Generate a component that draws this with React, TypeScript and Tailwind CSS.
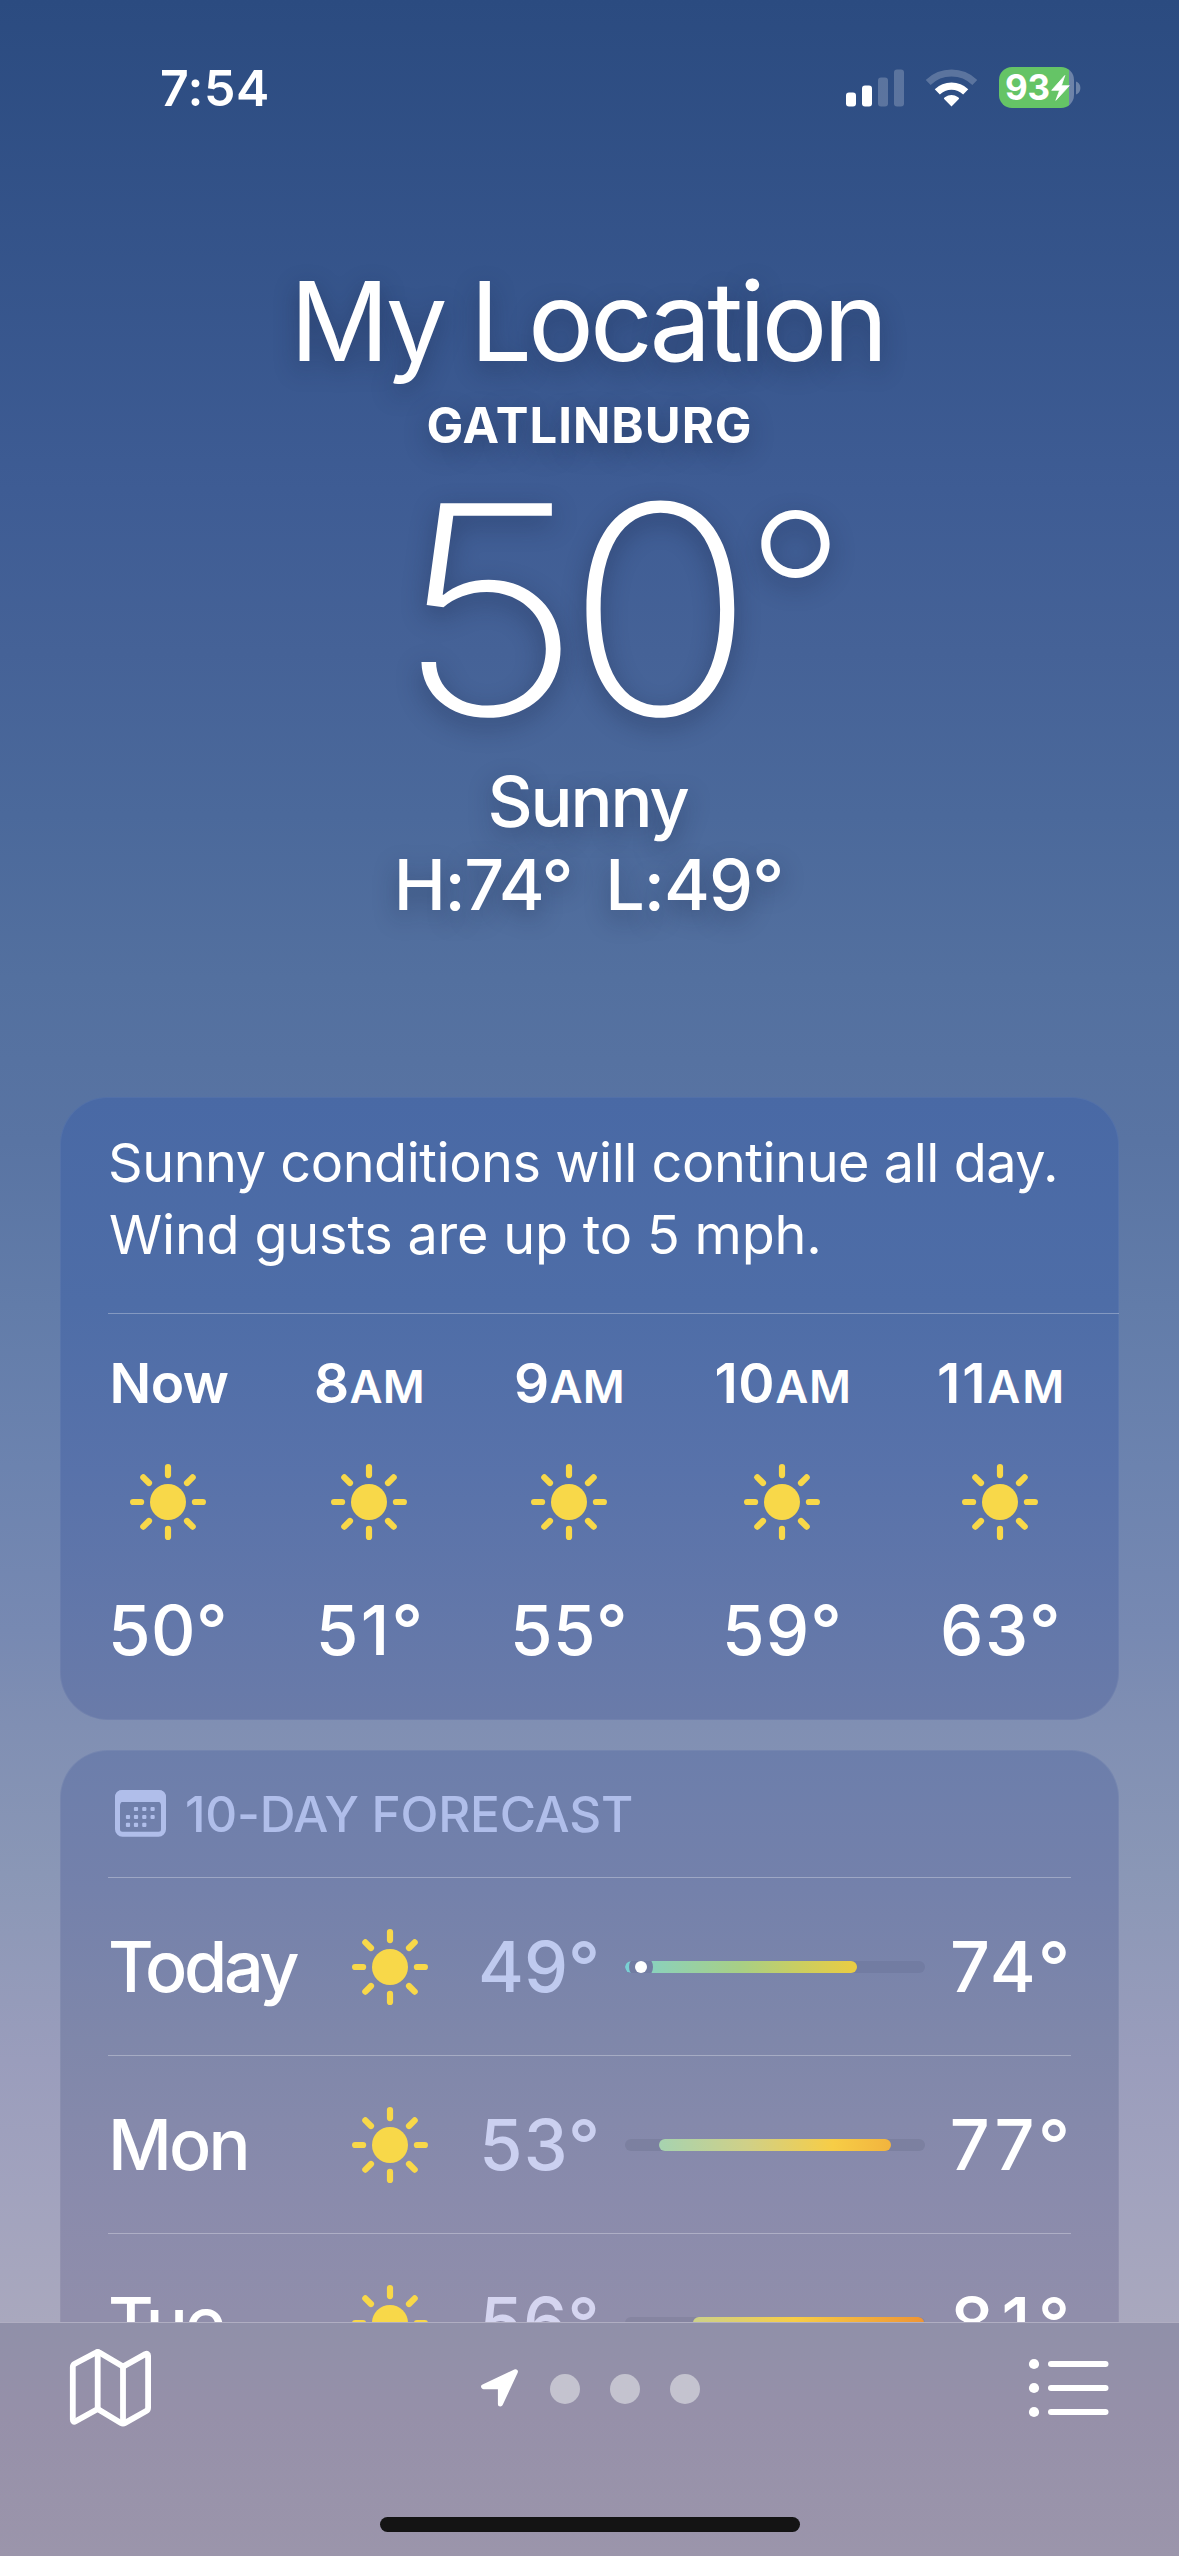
type Hour = { label: string; suffix?: string; temp: string; width: string; labelTracking: string; tempTracking: string };
type Day = {
  name: string;
  nameTracking: string;
  low: string;
  high: string;
  lowColor: string;
  lowTracking: string;
  highTracking: string;
  track: string;
  fill: string;
  now?: boolean;
};

const hours: Hour[] = [
  { label: "Now", temp: "50°", width: "w-[120px]", labelTracking: "tracking-[-0.6px] pl-[2px]", tempTracking: "tracking-[0.5px]" },
  { label: "8", suffix: "AM", temp: "51°", width: "w-[106px]", labelTracking: "tracking-[0.2px] pl-[1px]", tempTracking: "tracking-[2.2px] pl-[3px]" },
  { label: "9", suffix: "AM", temp: "55°", width: "w-[118px]", labelTracking: "tracking-[0.2px] pl-[1px]", tempTracking: "tracking-[0.5px]" },
  { label: "10", suffix: "AM", temp: "59°", width: "w-[132px]", labelTracking: "tracking-[0.6px] pl-[2px]", tempTracking: "tracking-[1.1px] pl-[1px]" },
  { label: "11", suffix: "AM", temp: "63°", width: "w-[128px]", labelTracking: "tracking-[1.8px] pl-[3px]", tempTracking: "tracking-[1.5px] pl-[2px]" },
];

const days: Day[] = [
  {
    name: "Today",
    nameTracking: "tracking-[-3.3px]",
    low: "49°",
    high: "74°",
    lowColor: "text-[#bfcaef]",
    lowTracking: "tracking-[0px]",
    highTracking: "tracking-[4px] -mr-[4px]",
    track: "bg-[#727ca2]",
    fill: "ml-0 w-[232px] bg-[linear-gradient(90deg,#78d0d6_0%,#8dd1b8_14%,#a8cf85_50%,#c9ce62_74%,#ebcc42_100%)]",
    now: true,
  },
  {
    name: "Mon",
    nameTracking: "tracking-[-2.8px]",
    low: "53°",
    high: "77°",
    lowColor: "text-[#cbd0f0]",
    lowTracking: "tracking-[1.2px] -mr-[1.2px]",
    highTracking: "tracking-[3.5px] -mr-[3.5px]",
    track: "bg-[#7c80a0]",
    fill: "ml-[34px] w-[232px] bg-[linear-gradient(90deg,#a6d3b0_0%,#d0d087_38%,#f7cd46_75%,#f2b43e_100%)]",
  },
  {
    name: "Tue",
    nameTracking: "tracking-[-2.8px]",
    low: "56°",
    high: "81°",
    lowColor: "text-[#d5d5f0]",
    lowTracking: "tracking-[0.5px]",
    highTracking: "tracking-[7.5px] -mr-[7.5px]",
    track: "bg-[#8685a1]",
    fill: "ml-[68px] w-[231px] bg-[linear-gradient(90deg,#ccd18a_0%,#f7cd46_44%,#ef9534_100%)]",
  },
];

function Sun() {
  const angles = [0, 45, 90, 135, 180, 225, 270, 315];
  return (
    <svg className="block size-[76px] shrink-0" viewBox="-38 -38 76 76">
      <circle r="18" fill="#f8d849" />
      {angles.map((a) => (
        <line key={a} x1="0" y1="-26.9" x2="0" y2="-34.9" stroke="#f8d849" strokeWidth="6.2" strokeLinecap="round" transform={`rotate(${a})`} />
      ))}
    </svg>
  );
}

function StatusBar() {
  return (
    <header className="flex h-[176px] shrink-0 items-center justify-between pr-[98px] pl-[160px]">
      <span className="text-[50px] leading-[60px] font-semibold tracking-[0.5px]">7:54</span>
      <div className="flex items-center">
        <svg className="mr-[22px] block h-[38px] w-[58px]" viewBox="0 0 58 38">
          <rect x="0" y="23.5" width="10" height="14" rx="3" fill="#fff" />
          <rect x="16" y="16.5" width="10" height="21" rx="3" fill="#fff" />
          <rect x="32" y="8.5" width="10" height="29" rx="3" fill="#fff" fillOpacity=".22" />
          <rect x="48" y="0.5" width="10" height="37" rx="3" fill="#fff" fillOpacity=".22" />
        </svg>
        <svg className="mr-[22px] block h-[38px] w-[51px]" viewBox="0 0 51 38" fill="none">
          <path d="M2.2 13.4A33.5 33.5 0 0 1 48.8 13.4" stroke="#fff" strokeOpacity=".22" strokeWidth="7" />
          <path d="M11.3 22.8A20.5 20.5 0 0 1 39.7 22.8" stroke="#fff" strokeWidth="7.4" />
          <path d="M25.5 37.5L17.9 29.7Q17.9 28.8 18.8 28.2A11.8 11.8 0 0 1 32.2 28.2Q33.1 28.8 33.1 29.7Z" fill="#fff" />
        </svg>
        <div className="mb-[1px] flex items-center">
          <div className="flex h-[41px] w-[75px] items-center rounded-[13px] bg-[linear-gradient(90deg,#65c466_70px,rgba(255,255,255,0.3)_70px)] pl-[6px]">
            <span className="text-[35px] leading-[41px] font-bold tracking-[-0.2px]">93</span>
            <svg className="ml-[1px] block h-[26px] w-[19px] shrink-0" viewBox="0 0 19 26">
              <path d="M13.8.5L.7 15.3H8.6L4.9 25.3L18.3 10.7H10.4Z" fill="#fff" stroke="#fff" strokeWidth=".8" strokeLinejoin="round" />
            </svg>
          </div>
          <svg className="ml-[2px] block h-[14px] w-[5px]" viewBox="0 0 5 14">
            <path d="M0 .5A7 7 0 0 1 0 13.5Z" fill="#fff" fillOpacity=".3" />
          </svg>
        </div>
      </div>
    </header>
  );
}

function Hero() {
  return (
    <section className="flex shrink-0 flex-col items-center pt-[80px] [text-shadow:0_8px_24px_rgba(20,30,60,0.4)]">
      <h1 className="mr-[5px] text-[110px] leading-[130px] font-[420] tracking-[-4.2px]">My Location</h1>
      <h2 className="text-[49px] leading-[80px] font-[680] tracking-[1px]">GATLINBURG</h2>
      <div className="flex h-[286px] items-center self-start pl-[395px] text-[291px] leading-[286px] font-[185]">
        <span className="block origin-left scale-x-[1.115]">5</span>
        <span className="ml-[2px] block origin-left scale-x-[1.085]">0</span>
        <span className="ml-[4px] block pb-[32px] text-[222px] leading-[254px] font-[250]">°</span>
      </div>
      <p className="mr-[4px] text-[70px] leading-[100px] font-medium tracking-[-2.1px]">Sunny</p>
      <p className="mr-[2px] flex gap-[33px] text-[70px] leading-[65px] font-medium">
        <span className="tracking-[-1.4px]">H:74°</span>
        <span className="tracking-[-0.95px]">L:49°</span>
      </p>
    </section>
  );
}

function HourlyCard() {
  return (
    <section className="mx-[60px] mt-[180px] h-[623px] w-[1059px] shrink-0 overflow-hidden rounded-[48px] bg-[linear-gradient(180deg,#4969a5_0%,#4e6da7_33%,#5872aa_60%,#6a7ba9_100%)] pl-[48px] shadow-[inset_0_0_0_1px_rgba(255,255,255,0.05)]">
      <div className="pt-[30px] text-[54px] leading-[72px]">
        <p className="tracking-[-0.46px]">Sunny conditions will continue all day.</p>
        <p className="pl-[1px] tracking-[-0.2px]">Wind gusts are up to 5 mph.</p>
      </div>
      <div className="mt-[42px] h-px bg-white/30" />
      <div className="flex gap-[88px] pt-[29px]">
        {hours.map((h) => (
          <div key={h.label} className={`flex shrink-0 flex-col items-center ${h.width}`}>
            <div className={`h-[80px] text-[55px] leading-[80px] font-[620] whitespace-nowrap ${h.labelTracking}`}>
              {h.label}
              {h.suffix && <span className="text-[45.5px] leading-[40px]">{h.suffix}</span>}
            </div>
            <div className="mt-[41px]">
              <Sun />
            </div>
            <div className={`mt-[50px] text-[69px] leading-[80px] font-medium whitespace-nowrap ${h.tempTracking}`}>{h.temp}</div>
          </div>
        ))}
      </div>
    </section>
  );
}

function CalendarIcon() {
  const dots = [
    [21, 19], [29.3, 19], [37.6, 19],
    [13, 27], [21, 27], [29.3, 27], [37.6, 27],
    [13, 34.8], [21, 34.8], [29.3, 34.8],
  ];
  return (
    <svg className="mb-[1px] ml-[7px] block h-[47px] w-[51px]" viewBox="0 0 51 47" fill="#b0beea">
      <rect x="2.5" y="2.5" width="46" height="41.7" rx="5" fill="none" stroke="#b0beea" strokeWidth="5" />
      <path d="M0 7.5Q0 0 7.5 0H43.5Q51 0 51 7.5V12H0Z" />
      <path d="M4 11H8.5Q5 12 5 15.5H4ZM47 11H42.5Q46 12 46 15.5H47Z" />
      {dots.map(([x, y]) => (
        <rect key={`${x}-${y}`} x={x - 2.1} y={y - 2.1} width="4.2" height="4.2" rx="1" />
      ))}
    </svg>
  );
}

function RangeBar({ day }: { day: Day }) {
  return (
    <div className={`h-[12px] w-[300px] overflow-hidden rounded-full ${day.track}`}>
      <div className={`flex h-[12px] items-center overflow-hidden rounded-full ${day.fill}`}>
        {day.now && (
          <div className="-my-[6px] ml-[4px] flex size-[24px] shrink-0 items-center justify-center rounded-full bg-[#727ca2]">
            <div className="size-[12px] rounded-full bg-white" />
          </div>
        )}
      </div>
    </div>
  );
}

function ForecastCard() {
  return (
    <section className="mx-[60px] mt-[30px] h-[700px] w-[1059px] shrink-0 rounded-[48px] bg-[linear-gradient(180deg,#6c7eab_0px,#7481ab_140px,#7f87aa_290px,#8a8bac_450px,#908eab_565px)] px-[48px] pt-[29px] shadow-[inset_0_0_0_1px_rgba(255,255,255,0.06)]">
      <div className="flex h-[70px] items-center text-[#b0beea]">
        <CalendarIcon />
        <span className="ml-[19px] text-[49.5px] leading-[70px] font-medium tracking-[-0.25px]">10-DAY FORECAST</span>
      </div>
      <div className="mt-[28px]">
        {days.map((d) => (
          <div key={d.name} className="flex h-[178px] items-center border-t border-white/30 text-[70px] leading-[90px] font-medium">
            <span className={`w-[244px] pt-[1px] ${d.nameTracking}`}>{d.name}</span>
            <Sun />
            <span className="flex w-[172px] justify-end pt-[1px]">
              <span className={`${d.lowColor} ${d.lowTracking}`}>{d.low}</span>
            </span>
            <div className="ml-[25px]">
              <RangeBar day={d} />
            </div>
            <span className="flex flex-1 justify-end pt-[1px] pr-[1px]">
              <span className={d.highTracking}>{d.high}</span>
            </span>
          </div>
        ))}
      </div>
    </section>
  );
}

function Toolbar() {
  return (
    <footer className="flex h-[234px] shrink-0 flex-col items-center border-t border-[#b0aec2] bg-[linear-gradient(180deg,#9090a9_0%,#9690a9_40%,#9b95ab_100%)]">
      <div className="flex h-[130px] w-full items-center justify-between pr-[69px] pl-[68px]">
        <svg className="block h-[84px] w-[86px]" viewBox="0 0 86 84" fill="none" stroke="#fff" strokeWidth="5.8" strokeLinejoin="round" strokeLinecap="round">
          <path d="M4.8 21.2Q4.8 18.9 6.8 17.8L27.6 6.7Q29.7 5.5 31.8 6.7L55 20.6L77.3 8.1Q80.1 6.8 80.1 9.8V61.7Q80.1 63.9 78.2 65L57.1 76.9Q55 78.1 52.9 76.9L29.7 63L7.6 75.3Q4.8 76.8 4.8 73.5Z" />
          <path d="M29.7 6V63M55 21V77" />
        </svg>
        <div className="mr-[2px] flex items-center">
          <svg className="mr-[32px] block h-[38px] w-[37px]" viewBox="0 0 37 38">
            <path d="M34.4 2.8L2.6 17.7H19.4V35Z" fill="#fff" stroke="#fff" strokeWidth="5" strokeLinejoin="round" />
          </svg>
          <div className="flex gap-[30px] pt-[2px]">
            <div className="size-[30px] rounded-full bg-[#c4c3cf]" />
            <div className="size-[30px] rounded-full bg-[#c4c3cf]" />
            <div className="size-[30px] rounded-full bg-[#c4c3cf]" />
          </div>
        </div>
        <svg className="block h-[60px] w-[82px]" viewBox="0 0 82 60" fill="#fff">
          {[6, 30, 54].map((y) => (
            <g key={y}>
              <circle cx="6" cy={y} r="5.1" />
              <rect x="20" y={y - 3} width="60.5" height="6" rx="3" />
            </g>
          ))}
        </svg>
      </div>
      <div className="mt-[64px] h-[15px] w-[420px] rounded-full bg-[#141414]" />
    </footer>
  );
}

export default function App() {
  return (
    <div className="flex h-[2556px] w-[1179px] flex-col overflow-hidden font-['Inter',sans-serif] text-white">
      <main className="flex h-[2322px] shrink-0 flex-col overflow-hidden bg-[linear-gradient(180deg,#2b4b80_0px,#3e5c94_489px,#456297_652px,#4b699b_815px,#53709f_978px,#5974a3_1141px,#627ca9_1304px,#6c83af_1467px,#7789b2_1630px,#808fb3_1725px,#8a97b6_1874px,#9a9dbc_2060px,#a2a3be_2200px,#a9a8be_2322px)]">
        <StatusBar />
        <Hero />
        <HourlyCard />
        <ForecastCard />
      </main>
      <Toolbar />
    </div>
  );
}
